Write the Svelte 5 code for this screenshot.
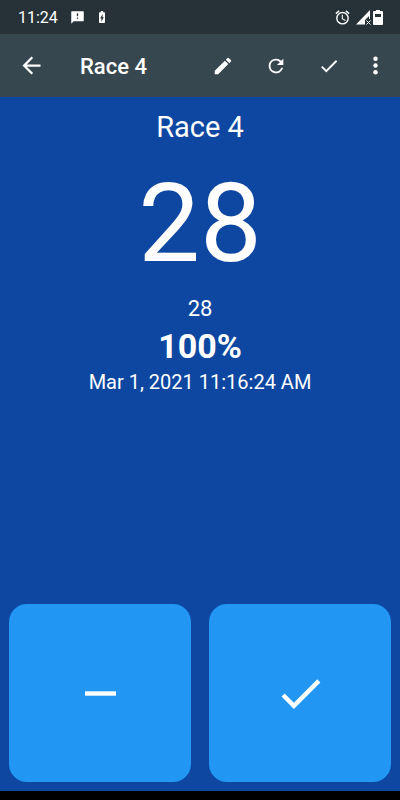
<script lang="ts">
	const race = 'Race 4';
	const total = 28;
	const timestamp = 'Mar 1, 2021 11:16:24 AM';

	let count = $state(28);

	let percent = $derived(Math.round((count / total) * 100));

	const check = 'M9 16.17 4.83 12l-1.42 1.41L9 19 21 7l-1.41-1.41z';

	const actions = [
		{
			label: 'Edit',
			path: 'M3 17.25V21h3.75L17.81 9.94l-3.75-3.75L3 17.25zM20.71 7.04a1 1 0 0 0 0-1.41l-2.34-2.34a1 1 0 0 0-1.41 0l-1.83 1.83 3.75 3.75 1.83-1.83z'
		},
		{
			label: 'Reset',
			path: 'M17.65 6.35A7.96 7.96 0 0 0 12 4a8 8 0 1 0 7.73 10h-2.08A6 6 0 1 1 12 6c1.66 0 3.14.69 4.22 1.78L13 11h7V4l-2.35 2.35z'
		},
		{ label: 'Done', path: check }
	];
</script>

<div class="screen">
	<div class="status">
		<span class="status__time">11:24</span>
		<svg class="status__message" viewBox="0 0 24 24" aria-hidden="true">
			<path d="M21 2H3c-.6 0-1 .4-1 1v19l4-4h15c.6 0 1-.4 1-1V3c0-.6-.4-1-1-1zm-8 12h-2v-2h2v2zm0-4h-2V5h2v5z" />
		</svg>
		<svg class="status__charging" viewBox="7 2 10 20" aria-hidden="true">
			<path d="M15.67 4H14V2h-4v2H8.33C7.6 4 7 4.6 7 5.33v15.33C7 21.4 7.6 22 8.33 22h7.33c.74 0 1.34-.6 1.34-1.33V5.33C17 4.6 16.4 4 15.67 4zM11 20v-5.5H9L13 7v5.5h2L11 20z" />
		</svg>
		<span class="status__spacer"></span>
		<svg class="status__alarm" viewBox="0 0 24 24" aria-hidden="true">
			<path d="M22 5.72l-4.6-3.86-1.29 1.53 4.6 3.86L22 5.72zM7.88 3.39 6.6 1.86 2 5.71l1.29 1.53 4.59-3.85zM12.5 8H11v6l4.75 2.85.75-1.23-4-2.37V8zM12 4a9 9 0 1 0 0 18 9 9 0 0 0 0-18zm0 16a7 7 0 1 1 0-14 7 7 0 0 1 0 14z" />
		</svg>
		<svg class="status__signal" viewBox="0 0 15 15" aria-hidden="true">
			<path d="M14 0v5L9 10v4.5H0z" />
			<path class="status__stroke" d="M10.5 10.5l4 4M14.500 10.5l-4 4M13.5 2v7" />
		</svg>
		<svg class="status__battery" viewBox="0 0 10 15" aria-hidden="true">
			<path d="M3 0h4v1h2q1 0 1 1v12q0 1-1 1H1q-1 0-1-1V2q0-1 1-1h2zM2 4v3h6V4z" fill-rule="evenodd" />
		</svg>
	</div>

	<header class="toolbar">
		<button class="toolbar__back" aria-label="Back">
			<svg viewBox="0 0 24 24" aria-hidden="true">
				<path d="M20 11H7.83l5.59-5.59L12 4l-8 8 8 8 1.41-1.41L7.83 13H20v-2z" />
			</svg>
		</button>
		<h1 class="toolbar__title">{race}</h1>
		{#each actions as action}
			<button class="toolbar__action" aria-label={action.label}>
				<svg viewBox="0 0 24 24" aria-hidden="true"><path d={action.path} /></svg>
			</button>
		{/each}
		<button class="toolbar__more" aria-label="More options">
			<svg viewBox="0 0 24 24" aria-hidden="true">
				<circle cx="12" cy="6" r="2" />
				<circle cx="12" cy="12" r="2" />
				<circle cx="12" cy="18" r="2" />
			</svg>
		</button>
	</header>

	<main class="counter">
		<h2 class="counter__name">{race}</h2>
		<div class="counter__value">{count}</div>
		<div class="counter__total">{total}</div>
		<div class="counter__percent">{percent}%</div>
		<div class="counter__time">{timestamp}</div>

		<div class="pad">
			<button class="pad__button" aria-label="Subtract one" onclick={() => (count = Math.max(0, count - 1))}>
				<svg viewBox="0 0 24 24" aria-hidden="true"><path d="M5 11h14v2H5z" /></svg>
			</button>
			<button class="pad__button" aria-label="Done">
				<svg viewBox="0 0 24 24" aria-hidden="true"><path d={check} /></svg>
			</button>
		</div>
	</main>
</div>

<style>
	:global(body) {
		margin: 0;
		background: #000;
	}

	.screen {
		display: flex;
		flex-direction: column;
		box-sizing: border-box;
		min-height: 100vh;
		padding-bottom: 9px;
		background: #000;
		color: #fff;
		font-family: Roboto, 'Liberation Sans', sans-serif;
	}

	svg {
		display: block;
		flex: none;
		fill: currentColor;
	}

	button {
		display: flex;
		align-items: center;
		justify-content: center;
		flex: none;
		padding: 0;
		border: 0;
		background: none;
		color: inherit;
		cursor: pointer;
	}

	/* System status bar */
	.status {
		display: flex;
		align-items: center;
		height: 34px;
		padding: 0 17px 0 18px;
		background: #263238;
	}

	.status__time {
		font-size: 16px;
	}

	.status__message {
		width: 15px;
		height: 15px;
		margin-left: 12px;
	}

	.status__charging {
		width: 6px;
		height: 12px;
		margin-left: 14px;
	}

	.status__spacer {
		flex: 1;
	}

	.status__alarm {
		width: 17px;
		height: 17px;
	}

	.status__signal {
		width: 15px;
		height: 15px;
		margin: 0 2px 0 5px;
	}

	.status__stroke {
		fill: none;
		stroke: currentColor;
	}

	.status__battery {
		width: 10px;
		height: 15px;
	}

	/* App bar */
	.toolbar {
		display: flex;
		align-items: center;
		height: 63px;
		padding: 0 5px 0 4px;
		background: #37474f;
	}

	.toolbar__back {
		width: 54px;
		height: 54px;
	}

	.toolbar__back svg,
	.toolbar__more svg {
		width: 27px;
		height: 27px;
	}

	.toolbar__title {
		flex: 1;
		margin: 0 0 0 22px;
		padding-top: 2px;
		font-size: 22px;
		font-weight: 500;
		line-height: 28px;
	}

	.toolbar__action {
		width: 53px;
		height: 54px;
	}

	.toolbar__action svg {
		width: 22px;
		height: 22px;
	}

	.toolbar__more {
		width: 40px;
		height: 54px;
	}

	/* Counter */
	.counter {
		display: flex;
		flex: 1;
		flex-direction: column;
		align-items: center;
		padding: 12px 9px 9px;
		background: #0d47a1;
		text-align: center;
	}

	.counter__name {
		margin: 0;
		font-size: 29px;
		font-weight: 400;
		line-height: 36px;
	}

	.counter__value {
		margin: 13px 0 2px;
		font-size: 110px;
		line-height: 132px;
	}

	.counter__total {
		font-size: 22px;
		line-height: 34px;
	}

	.counter__percent {
		font-size: 34px;
		font-weight: 700;
		line-height: 40px;
	}

	.counter__time {
		font-size: 20px;
		line-height: 32px;
	}

	.pad {
		display: grid;
		grid-template-columns: 1fr 1fr;
		gap: 18px;
		width: 100%;
		margin-top: auto;
	}

	.pad__button {
		height: 178px;
		border-radius: 18px;
		background: #2196f3;
	}

	.pad__button svg {
		width: 53px;
		height: 53px;
	}
</style>
